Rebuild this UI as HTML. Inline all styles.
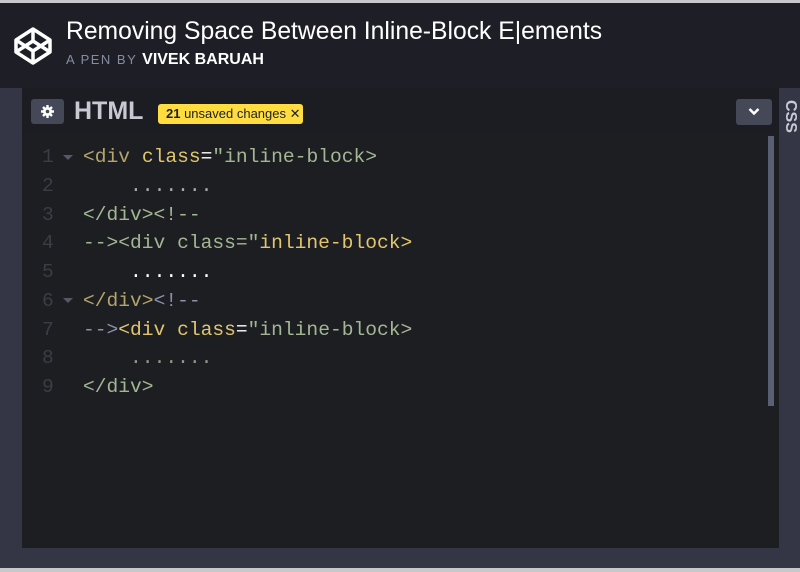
<!DOCTYPE html>
<html><head><style>
body{margin:0;width:800px;height:572px;overflow:hidden;background:#1e1f26;font-family:"Liberation Sans",sans-serif;position:relative}
.top{position:absolute;left:0;top:0;width:800px;height:3px;background:#c8c8cc}
.hdr{position:absolute;left:0;top:3px;width:800px;height:85px;background:#1e1f26}
.title{position:absolute;left:66px;top:18px;color:#fff;font-size:24.7px;white-space:nowrap}
.sub{position:absolute;left:66px;top:51px;color:#fff;font-size:16px;font-weight:bold;white-space:nowrap}
.sub span{color:#868ca0;font-size:13px;font-weight:normal;letter-spacing:1.5px}
.lbar{position:absolute;left:0;top:88px;width:22px;height:460px;background:#343645}
.rbar{position:absolute;left:779px;top:88px;width:21px;height:460px;background:#343645}
.bbar{position:absolute;left:0;top:548px;width:800px;height:20px;background:#343645}
.bline{position:absolute;left:0;top:568px;width:800px;height:4px;background:#c8c8cc}
.eh{position:absolute;left:22px;top:88px;width:757px;height:46px;background:#1c1d22}
.code{position:absolute;left:22px;top:134px;width:757px;height:414px;background:#1d1e22}
.gear{position:absolute;left:31px;top:99px;width:33px;height:25px;background:#444857;border-radius:3px}
.html{position:absolute;left:74px;top:97px;color:#c7c9d3;font-size:25px;font-weight:bold}
.badge{position:absolute;left:158px;top:104px;height:20px;width:145px;background:#ffdd40;border-radius:3px;color:#1e1f26;font-size:13px;line-height:20px;padding-left:8px;box-sizing:border-box;white-space:nowrap}
.dd{position:absolute;left:736px;top:99px;width:36px;height:26px;background:#444857;border-radius:3px}
.css{position:absolute;left:781px;top:100px;color:#c7c9d3;font-size:16px;font-weight:bold;writing-mode:vertical-rl}
.sb{position:absolute;left:768px;top:136px;width:6px;height:270px;background:#5a5f73}
pre{position:absolute;left:0;top:143px;margin:0;font-family:"Liberation Mono",monospace;font-size:19.6px;line-height:28.75px;color:#a3b794}
.ln{position:absolute;left:42px;top:143px;margin:0;font-family:"Liberation Mono",monospace;font-size:19.6px;line-height:28.75px;color:#3b3d46}
.t{color:#b5a46b}.y{color:#e2c66f}.w{color:#fff}.g{color:#a3b794}.b{color:#8a91ab}.d{color:#8f9a80}.d2{color:#a9aab0}
.fold{position:absolute;left:63px;border-left:5px solid transparent;border-right:5px solid transparent;border-top:5px solid #555866}
</style></head><body>
<div class="top"></div>
<div class="hdr"></div>
<svg style="position:absolute;left:13px;top:26px" width="40" height="40" viewBox="0 0 40 40" fill="none" stroke="#fff" stroke-width="3.5" stroke-linejoin="round"><path d="M20 3 L37 14 L37 26 L20 37 L3 26 L3 14 Z M3 14 L20 25 L37 14 M3 26 L20 15 L37 26 M20 3 V15 M20 25 V37"/></svg>
<div class="title">Removing Space Between Inline-Block E|ements</div>
<div class="sub"><span>A PEN BY </span>VIVEK BARUAH</div>
<div class="lbar"></div><div class="rbar"></div><div class="bbar"></div><div class="bline"></div>
<div class="eh"></div>
<div class="code"></div>
<div class="gear"><svg style="position:absolute;left:10px;top:6px" width="13" height="13" viewBox="0 0 13 13"><circle cx="6.5" cy="6.5" r="4.5" fill="#fff"/><g stroke="#fff" stroke-width="2.4"><path d="M6.5 0V13M0 6.5H13M2 2L11 11M11 2L2 11"/></g><circle cx="6.5" cy="6.5" r="1.8" fill="#444857"/></svg></div>
<div class="html">HTML</div>
<div class="badge"><b>21</b> unsaved changes ✕</div>
<div class="dd"><svg style="position:absolute;left:12px;top:8px" width="12" height="9" viewBox="0 0 12 9"><path d="M1.5 2L6 6.5L10.5 2" stroke="#fff" stroke-width="2.5" fill="none"/></svg></div>
<div class="css">CSS</div>
<div class="sb"></div>
<div class="ln">1<br>2<br>3<br>4<br>5<br>6<br>7<br>8<br>9</div>
<div class="fold" style="top:155px"></div><div class="fold" style="top:298px"></div>
<pre style="left:83px"><span class="t">&lt;div</span> <span class="y">class</span><span class="w">=</span><span class="g">"inline-block&gt;</span>
    <span class="d2">.......</span>
<span class="g">&lt;/div&gt;&lt;!--</span>
<span class="g">--&gt;&lt;div class="</span><span class="y">inline-block&gt;</span>
    <span class="w">.......</span>
<span class="t">&lt;/div&gt;</span><span class="b">&lt;!--</span>
<span class="b">--&gt;</span><span class="y">&lt;div class</span><span class="w">=</span><span class="g">"inline-block&gt;</span>
    <span class="d">.......</span>
<span class="g">&lt;/div&gt;</span></pre>
</body></html>
